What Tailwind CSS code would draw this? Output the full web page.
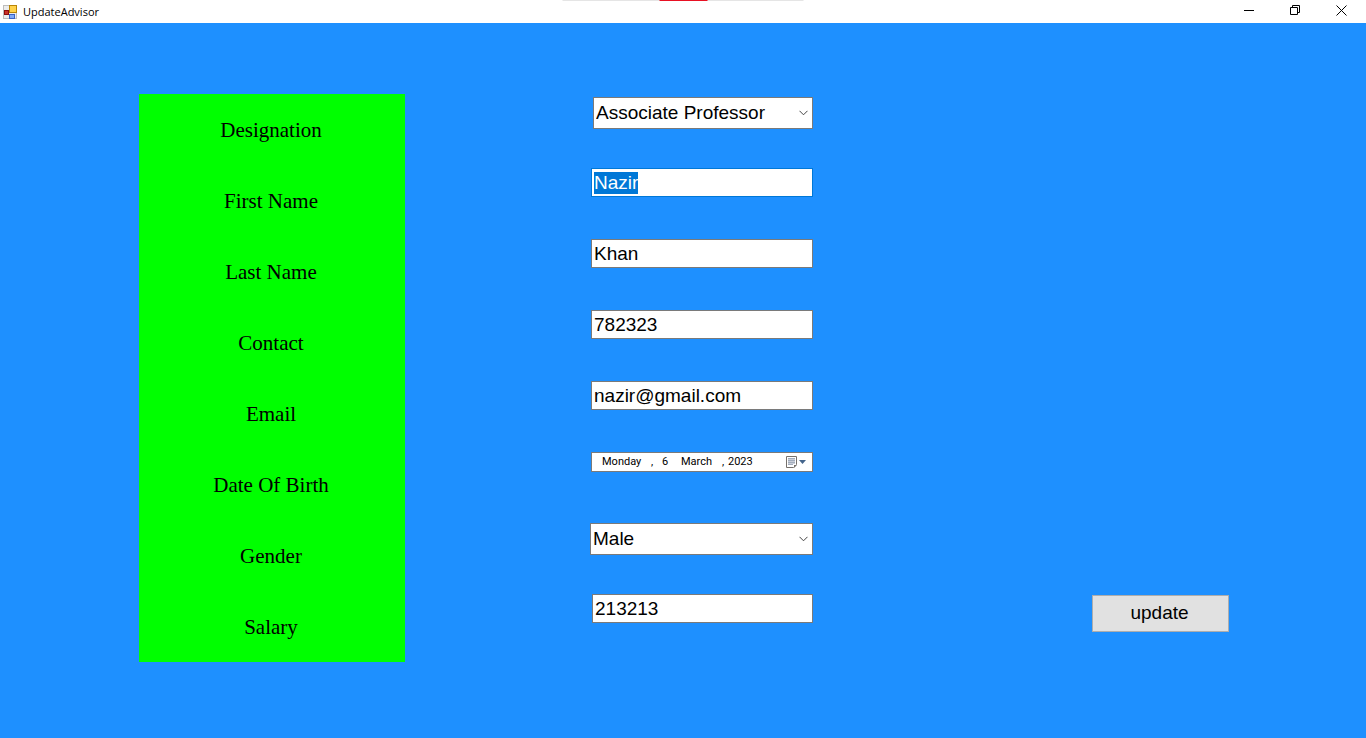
<!DOCTYPE html>
<html lang="en">
<head>
<meta charset="utf-8">
<meta name="viewport" content="width=device-width, initial-scale=1">
<title>UpdateAdvisor</title>
<script src="https://cdn.jsdelivr.net/npm/@tailwindcss/browser@4"></script>
</head>
<body class="flex min-h-screen flex-col bg-[#1e90ff] font-['Liberation_Sans',Arial,sans-serif] text-black">
<header class="relative flex h-[23px] items-center justify-between bg-white">
  <div class="flex items-center gap-[6px] pl-[3px]">
    <svg class="h-[14px] w-[14px]" viewBox="0 0 14 14" aria-hidden="true">
      <rect x=".5" y=".5" width="13" height="13" fill="#ececec" stroke="#bdbdbd"/>
      <rect x="1" y="5" width="5" height="5" fill="#8e0d0d"/><rect x="2" y="6" width="3" height="3" fill="#c9302a"/>
      <rect x="6" y="0" width="8" height="8" fill="#b98607"/><rect x="7" y="1" width="6" height="6" fill="#ffd24a"/>
      <rect x="6" y="9" width="6" height="5" fill="#3a62c4"/><rect x="7" y="10" width="4" height="3" fill="#7fa9f5"/>
    </svg>
    <h1 class="text-[11px] leading-[22px] font-['Open_Sans',sans-serif]">UpdateAdvisor</h1>
  </div>
  <div class="flex h-full pr-[2px]">
    <button type="button" aria-label="Minimize" class="flex w-[46px] justify-center pt-[5px]"><svg class="h-[11px] w-[11px]" viewBox="0 0 11 11"><path d="M0 5.5h10" stroke="#000"/></svg></button>
    <button type="button" aria-label="Restore" class="flex w-[46px] justify-center pt-[5px]"><svg class="h-[11px] w-[11px]" viewBox="0 0 11 11" fill="none" stroke="#000"><path d="M.5 2.5h7v7h-7zM2.5 2.5v-2h7v7h-2"/></svg></button>
    <button type="button" aria-label="Close" class="flex w-[46px] justify-center pt-[5px]"><svg class="h-[11px] w-[11px]" viewBox="0 0 11 11"><path d="M.5 .5l10 10M10.5 .5l-10 10" stroke="#000"/></svg></button>
  </div>
  <div class="absolute top-0 left-1/2 flex h-px w-[241px] -translate-x-1/2 justify-center bg-[#e5e5e5]"><span class="w-12 bg-[#e81123]"></span></div>
</header>

<form class="grid grid-cols-[139fr_266fr_185fr_223fr_279fr_137fr_137fr] pt-[71px]">
  <div class="col-start-2 grid auto-rows-[71px] items-center bg-[#00ff00] pr-[2px] text-center font-[Georgia,'Liberation_Serif',serif] text-[21px] *:pt-[3px]">
    <label for="designation">Designation</label>
    <label for="first">First Name</label>
    <label for="last">Last Name</label>
    <label for="contact">Contact</label>
    <label for="email">Email</label>
    <label for="dob">Date Of Birth</label>
    <label for="gender">Gender</label>
    <label for="salary">Salary</label>
  </div>

  <div class="col-start-4 grid auto-rows-[71px] items-start justify-items-end text-[19px] *:mt-[3px]">
    <div class="grid w-[220px] items-center">
      <select id="designation" class="col-start-1 row-start-1 h-8 w-full appearance-none border border-[#7a7a7a] bg-white pl-[2px]"><option>Associate Professor</option><option>Professor</option><option>Lecturer</option></select>
      <svg class="pointer-events-none col-start-1 row-start-1 mr-[5px] h-[6px] w-[9px] justify-self-end" viewBox="0 0 9 6" fill="none" stroke="#444"><path d="M.5 .8l4 4 4-4"/></svg>
    </div>
    <input id="first" type="text" value="Nazir" autofocus class="h-[29px] w-[222px] border border-[#0078d7] bg-white px-[2px] pt-px caret-transparent outline-none selection:bg-[#0078d7] selection:text-white">
    <input id="last" type="text" value="Khan" class="h-[29px] w-[222px] border border-[#7a7a7a] bg-white px-[2px] pt-px">
    <input id="contact" type="text" value="782323" class="h-[29px] w-[222px] border border-[#7a7a7a] bg-white px-[2px] pt-px">
    <input id="email" type="text" value="nazir@gmail.com" class="h-[29px] w-[222px] border border-[#7a7a7a] bg-white px-[2px] pt-px">
    <button id="dob" type="button" class="flex h-5 w-[222px] items-center border border-[#7a7a7a] bg-white pr-[6px] pl-[10px] text-left font-[Roboto,sans-serif] text-[11px]">
      <span class="w-[49px]">Monday</span><span class="w-[11px]">,</span><span class="w-[19px]">6</span><span class="w-[41px]">March</span><span class="w-[6px]">,</span><span class="flex-1">2023</span>
      <svg class="h-[12px] w-[20px]" viewBox="0 0 20 12" aria-hidden="true">
        <path d="M.5 .5h10v8l-3 3h-7z" fill="#fff" stroke="#75706c"/>
        <path d="M2 2.5h7M2 4.5h7M2 6.5h7M2 8.5h5" stroke="#a3adbd"/>
        <path d="M2 3.5h7M2 5.5h7M2 7.5h7" stroke="#c9ced8"/>
        <path d="M11 9l-3 3v-3z" fill="#75706c"/>
        <path d="M13 4h7l-3.500 4z" fill="#44658c"/>
      </svg>
    </button>
    <div class="grid w-[223px] items-center">
      <select id="gender" class="col-start-1 row-start-1 h-8 w-full appearance-none border border-[#7a7a7a] bg-white pl-[2px]"><option>Male</option><option>Female</option></select>
      <svg class="pointer-events-none col-start-1 row-start-1 mr-[5px] h-[6px] w-[9px] justify-self-end" viewBox="0 0 9 6" fill="none" stroke="#444"><path d="M.5 .8l4 4 4-4"/></svg>
    </div>
    <input id="salary" type="text" value="213213" class="h-[29px] w-[221px] border border-[#7a7a7a] bg-white px-[2px] pt-px">
  </div>

  <button type="button" class="col-start-6 mb-[30px] h-[37px] self-end border border-[#adadad] bg-[#e1e1e1] pr-[2px] text-[19px]">update</button>
</form>
<script>
  const first = document.getElementById('first');
  first.focus();
  first.select();
</script>
</body>
</html>
